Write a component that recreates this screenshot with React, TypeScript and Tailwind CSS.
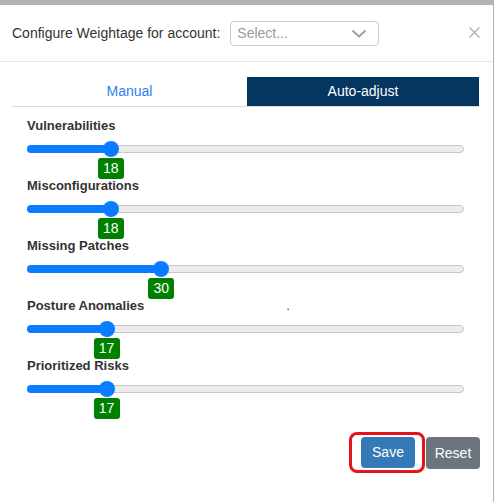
import React from "react";

const font = { fontFamily: '"Liberation Sans", Arial, sans-serif' };

const weights = [
  { label: "Vulnerabilities", value: 18 },
  { label: "Misconfigurations", value: 18 },
  { label: "Missing Patches", value: 30 },
  { label: "Posture Anomalies", value: 17, dot: true },
  { label: "Prioritized Risks", value: 17 },
];

const TRACK_W = 437;
const THUMB = 16;

function thumbCenter(v: number) {
  return THUMB / 2 + (v / 100) * (TRACK_W - THUMB);
}

function WeightSlider({ label, value, dot }: { label: string; value: number; dot?: boolean }) {
  const c = thumbCenter(value);
  return (
    <div className="h-[60px]">
      <div className="h-4 text-[13px] leading-4 font-bold text-[#333]">
        {label}
        {dot && <span className="ml-[142px] font-normal">.</span>}
      </div>
      <div className="relative mt-[7px] h-4 w-[437px]">
        <div className="absolute left-0 right-0 top-1 h-2 rounded-full border border-[#c8c8c8] bg-[#ececec]" />
        <div
          className="absolute left-0 top-1 h-2 rounded-full bg-[#0a7cff]"
          style={{ width: c }}
        />
        <div
          className="absolute top-0 h-4 w-4 rounded-full bg-[#0a7cff]"
          style={{ left: c - THUMB / 2 }}
        />
      </div>
      <div className="relative mt-[1px] h-5">
        <div
          className="absolute top-0 flex h-[21px] w-[26px] items-center justify-center rounded-[3px] bg-[#008000] text-[14px] text-white"
          style={{ left: c - 13 }}
        >
          {value}
        </div>
      </div>
    </div>
  );
}

export default function App() {
  return (
    <div className="h-[502px] w-[494px] overflow-hidden bg-[#b3b3b3]" style={font}>
      <div className="mt-[5px] h-[497px] w-[493px] bg-white">
        <div className="flex h-[57px] items-start border-b border-[#e5e5e5] pt-4">
          <div className="ml-3 mt-[3px] text-[14px] leading-[19px] text-[#333]">
            Configure Weightage for account:
          </div>
          <div className="ml-[10px] flex h-[25px] w-[149px] items-center justify-between rounded border border-[#cccccc] pl-[6px] pr-[11px]">
            <span className="text-[14px] text-[#9a9a9a]">Select...</span>
            <svg width="16" height="9" viewBox="0 0 16 9" fill="none">
              <path d="M1.5 1.5 L8 7.5 L14.5 1.5" stroke="#9a9a9a" strokeWidth="1.8" />
            </svg>
          </div>
          <svg className="ml-[90px] mt-[6px]" width="11" height="11" viewBox="0 0 11 11">
            <path d="M0.5 0.5 L10.5 10.5 M10.5 0.5 L0.5 10.5" stroke="#b0b0b0" strokeWidth="1.3" />
          </svg>
        </div>

        <div className="mx-3 mt-[15px] flex w-[467px] border-b border-[#dcdcdc]">
          <div className="flex h-[29px] w-[235px] items-center justify-center text-[14px] text-[#2f80ed]">
            Manual
          </div>
          <div className="flex h-[29px] flex-1 items-center justify-center bg-[#04365f] text-[14px] text-white">
            Auto-adjust
          </div>
        </div>

        <div className="mt-[11px] pl-[27px]">
          {weights.map((w) => (
            <WeightSlider key={w.label} label={w.label} value={w.value} dot={w.dot} />
          ))}
        </div>

        <div className="mt-[19px] flex justify-end gap-[11px] pr-[13px]">
          <div className="relative">
            <span className="absolute -left-[12px] -top-[5px] h-[41px] w-[76px] rounded-lg border-[3px] border-[#e5141c]" />
            <button className="relative h-[31px] w-[54px] rounded bg-[#337ab7] text-[14px] text-white">
              Save
            </button>
          </div>
          <button className="h-[32px] w-[54px] rounded bg-[#6c757d] text-[14px] text-white">
            Reset
          </button>
        </div>
      </div>
    </div>
  );
}
